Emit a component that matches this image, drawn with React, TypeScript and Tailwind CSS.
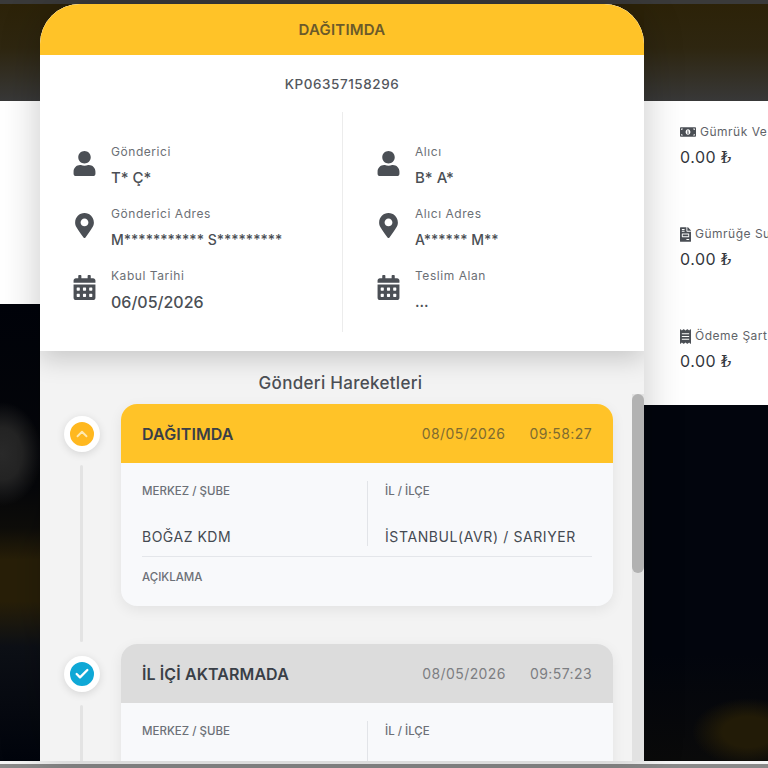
import { ChevronUp, Check } from "lucide-react";
import {
  FaUser,
  FaMapMarkerAlt,
  FaCalendarAlt,
  FaMoneyBillAlt,
  FaFileInvoice,
  FaReceipt,
} from "react-icons/fa";
import type { ReactNode } from "react";

function InfoRow(props: { icon: ReactNode; label: string; value: string; valueClass: string }) {
  return (
    <div className="flex h-[62px] items-start">
      <div className="flex h-[62px] w-[28px] items-center justify-center pb-[4px] text-[#4b4f55]">{props.icon}</div>
      <div className="ml-[13px] min-w-0 pt-[8px]">
        <div className="h-[20px] text-[12px] leading-[20px] tracking-[0.55px] text-[#6b6f75]">{props.label}</div>
        <div className={"mt-[4px] h-[24px] leading-[24px] text-[#4b4f55] " + props.valueClass}>{props.value}</div>
      </div>
    </div>
  );
}

function CostItem(props: { icon: ReactNode; label: string }) {
  return (
    <div className="h-[102px] whitespace-nowrap">
      <div className="flex h-[20px] items-center text-[12px] tracking-[0.5px] text-[#5f6368]">
        {props.icon}
        <span>{props.label}</span>
      </div>
      <div className="mt-[5px] text-[16px] leading-[20px] tracking-[0.5px] text-[#33373d]">
        0.00 <span className="font-['Liberation_Serif','DejaVu_Serif',serif] text-[16px]">₺</span>
      </div>
    </div>
  );
}

function MoveCard(props: {
  title: string;
  date: string;
  time: string;
  headClass: string;
  dateClass: string;
  branch?: string;
  city?: string;
}) {
  return (
    <div className="overflow-hidden rounded-[16px] bg-[#f8f9fb] shadow-[0_4px_14px_rgba(0,0,0,0.07)]">
      <div className={"flex h-[59px] items-center justify-between px-[21px] " + props.headClass}>
        <span className="text-[16px] font-semibold tracking-[0.1px] text-[#3a3f47]">{props.title}</span>
        <span className={"flex gap-[24px] text-[14px] tracking-[0.42px] " + props.dateClass}>
          <span>{props.date}</span>
          <span>{props.time}</span>
        </span>
      </div>
      <div className="px-[21px]">
        <div className="flex h-[94px] items-start border-b border-[#e4e6ea] pt-[18px]">
          <div className="h-[65px] w-[226px] border-r border-[#e2e4e8]">
            <div className="text-[11.5px] font-medium leading-[20px] text-[#6c7077]">MERKEZ / ŞUBE</div>
            {props.branch && (
              <div className="mt-[26px] text-[14px] leading-[20px] tracking-[0.5px] text-[#454a52]">{props.branch}</div>
            )}
          </div>
          <div className="pl-[17px]">
            <div className="text-[11.5px] font-medium leading-[20px] text-[#6c7077]">İL / İLÇE</div>
            {props.city && (
              <div className="mt-[26px] text-[14px] leading-[20px] tracking-[0.6px] text-[#454a52]">{props.city}</div>
            )}
          </div>
        </div>
        {props.branch && (
          <div className="h-[49px] pt-[10px] text-[11.5px] font-medium leading-[20px] text-[#6c7077]">AÇIKLAMA</div>
        )}
      </div>
    </div>
  );
}

function Move(props: { dot: ReactNode; ring: string; children: ReactNode }) {
  return (
    <div className="flex h-[240px] shrink-0">
      <div className="flex w-[81px] shrink-0 flex-col items-center pl-[2px]">
        <div className={"mt-[12px] flex h-[36px] w-[36px] items-center justify-center rounded-full border-[6px] border-white shadow-[0_2px_8px_rgba(0,0,0,0.12)] " + props.ring}>
          {props.dot}
        </div>
        <div className="mt-[13px] h-[177px] w-[3px] rounded-full bg-[#e3e3e3]"></div>
      </div>
      <div className="w-[492px] shrink-0">{props.children}</div>
    </div>
  );
}

export default function App() {
  return (
    <div className="flex h-[768px] w-[768px] flex-col overflow-hidden bg-black font-['Inter',sans-serif]">
      <div className="h-[4px] shrink-0 bg-[#3a3a3a]"></div>

      <div className="flex min-h-0 flex-1 bg-[#2c2208]">
        {/* linker kolom achter de modal */}
        <div className="flex w-[40px] shrink-0 flex-col">
          <div className="h-[97px] bg-[linear-gradient(180deg,#2c2208_0%,#2e2610_45%,#383838_100%)]"></div>
          <div className="h-[203px] bg-white"></div>
          <div className="flex-1 bg-[radial-gradient(ellipse_40px_52px_at_2px_150px,#2a2a2a_0%,#242424_50%,transparent_100%),linear-gradient(180deg,#01030a_0%,#06070a_40%,#0e0d0a_49%,#281f08_56%,#281f08_65%,#0d1016_75%,#01040c_100%)]"></div>
        </div>

        {/* modal */}
        <div className="relative z-10 flex w-[604px] shrink-0 flex-col overflow-hidden rounded-t-[40px] bg-[#f3f3f3] shadow-[0_0_40px_rgba(0,0,0,0.22)]">
          <div className="z-10 shrink-0 bg-white shadow-[0_8px_24px_rgba(0,0,0,0.18)]">
            <div className="flex h-[51px] items-center justify-center bg-[#ffc328] pt-[1px] text-[15px] font-semibold tracking-[0.2px] text-[#6b5a2a]">
              DAĞITIMDA
            </div>
            <div className="pt-[19px] text-center text-[13.5px] font-medium leading-[20px] tracking-[0.55px] text-[#53575d]">
              KP06357158296
            </div>
            <div className="flex h-[257px] pt-[18px]">
              <div className="h-[220px] w-[303px] border-r border-[#ececec] pl-[30px] pt-[22px]">
                <InfoRow icon={<FaUser size={25} />} label="Gönderici" value="T* Ç*" valueClass="text-[15px] font-medium" />
                <InfoRow icon={<FaMapMarkerAlt size={25} />} label="Gönderici Adres" value="M*********** S*********" valueClass="text-[14px] font-medium" />
                <InfoRow icon={<FaCalendarAlt size={25} />} label="Kabul Tarihi" value="06/05/2026" valueClass="text-[16px] font-medium" />
              </div>
              <div className="h-[220px] pl-[31px] pt-[22px]">
                <InfoRow icon={<FaUser size={25} />} label="Alıcı" value="B* A*" valueClass="text-[15px] font-medium" />
                <InfoRow icon={<FaMapMarkerAlt size={25} />} label="Alıcı Adres" value="A****** M**" valueClass="text-[14px] font-medium" />
                <InfoRow icon={<FaCalendarAlt size={25} />} label="Teslim Alan" value="..." valueClass="text-[15px] font-medium" />
              </div>
            </div>
          </div>

          <div className="h-[43px] shrink-0 pt-[20px] pr-[3px] text-center text-[17px] font-medium leading-[24px] tracking-[0.3px] text-[#4b4f55]">
            Gönderi Hareketleri
          </div>

          <div className="flex min-h-0 flex-1">
            <div className="min-w-0 flex-1 overflow-hidden pt-[10px]">
              <div className="flex flex-col">
                <Move
                  ring="bg-[#ffb81f]"
                  dot={<ChevronUp size={18} strokeWidth={2.5} className="text-[#ffe9b0]" />}
                >
                  <MoveCard
                    title="DAĞITIMDA"
                    date="08/05/2026"
                    time="09:58:27"
                    headClass="bg-[#ffc328]"
                    dateClass="text-[#7e6b30]"
                    branch="BOĞAZ KDM"
                    city="İSTANBUL(AVR) / SARIYER"
                  />
                </Move>
                <Move
                  ring="bg-[#0fa8d6]"
                  dot={<Check size={16} strokeWidth={3.5} className="text-white" />}
                >
                  <MoveCard
                    title="İL İÇİ AKTARMADA"
                    date="08/05/2026"
                    time="09:57:23"
                    headClass="bg-[#dcdcdc]"
                    dateClass="text-[#7c7e82]"
                  />
                </Move>
              </div>
            </div>
            <div className="w-[12px] shrink-0 bg-[#e2e2e2]">
              <div className="h-[179px] rounded-full bg-[#b2b2b2]"></div>
            </div>
          </div>
        </div>

        {/* rechter kolom achter de modal */}
        <div className="flex min-w-0 flex-1 flex-col">
          <div className="h-[97px] shrink-0 bg-[linear-gradient(180deg,#2c2208_0%,#2e2610_45%,#383838_100%)]"></div>
          <div className="h-[304px] shrink-0 overflow-hidden bg-white pl-[36px] pt-[21px]">
            <CostItem icon={<FaMoneyBillAlt size={16} className="mr-[4px] shrink-0 text-[#4b4f55]" />} label="Gümrük Ve" />
            <CostItem icon={<FaFileInvoice size={15} className="mr-[4px] w-[11px] shrink-0 text-[#4b4f55]" />} label="Gümrüğe Su" />
            <CostItem icon={<FaReceipt size={15} className="mr-[4px] w-[11px] shrink-0 text-[#4b4f55]" />} label="Ödeme Şart" />
          </div>
          <div className="flex-1 bg-[radial-gradient(ellipse_56px_34px_at_104px_327px,#221b07_0%,#221b07_45%,transparent_100%),linear-gradient(180deg,#02050d_0%,#02050d_70%,#0a0a0a_100%)]"></div>
        </div>
      </div>

      <div className="h-[3px] shrink-0 bg-[#f5f5f5]"></div>
      <div className="h-[4px] shrink-0 bg-[#8a8a8a]"></div>
    </div>
  );
}
